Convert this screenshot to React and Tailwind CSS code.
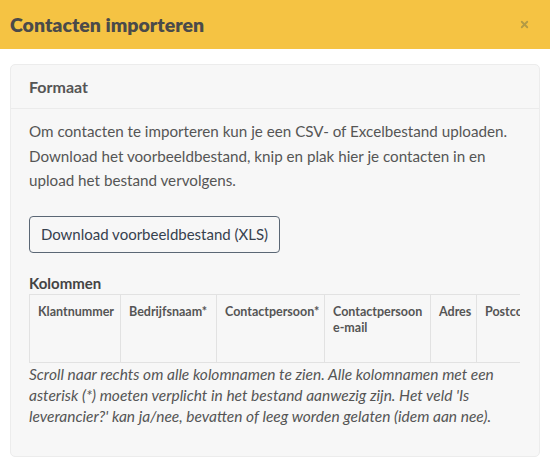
import { X } from 'lucide-react'

const COLUMNS = [
  { label: 'Klantnummer', w: 'w-[91px]' },
  { label: 'Bedrijfsnaam*', w: 'w-[96px]' },
  { label: 'Contactpersoon*', w: 'w-[108px]' },
  { label: 'Contactpersoon e-mail', w: 'w-[106px]' },
  { label: 'Adres', w: 'w-[46px]' },
  { label: 'Postcode', w: 'w-[90px]' },
  { label: 'Plaats', w: 'w-[70px]' },
]

export default function App() {
  return (
    <div className="w-[550px] h-[469px] bg-white overflow-hidden text-[#555]" style={{ fontFamily: 'Lato, "Open Sans", sans-serif' }}>
      <header className="h-[49px] bg-[#f5c343] flex items-center justify-between pl-[10px] pr-[20px]">
        <h1 className="text-[19.5px] font-extrabold text-[#4a4a4a]">Contacten importeren</h1>
        <X size={11} strokeWidth={4} className="text-[#b39a45]" />
      </header>

      <section className="mx-[10px] mt-[15px] rounded-[5px] border border-[#ececec] bg-[#f7f7f7] h-[393px]">
        <div className="h-[44px] flex items-center px-[18px] border-b border-[#ebebeb]">
          <h2 className="text-[16px] font-bold text-[#555]">Formaat</h2>
        </div>
        <div className="px-[18px] pt-[10px]">
          <p className="text-[15.2px] leading-[24.5px]">
            Om contacten te importeren kun je een CSV- of Excelbestand uploaden. Download het voorbeeldbestand, knip en plak hier je contacten in en upload het bestand vervolgens.
          </p>
          <button
            type="button"
            className="mt-[23px] h-[37px] w-[251px] rounded-[4px] border border-[#5b6775] text-[15px] text-[#36414e] bg-transparent"
          >
            Download voorbeeldbestand (XLS)
          </button>
          <h3 className="mt-[21px] text-[15px] font-bold text-[#444] leading-[18px]">Kolommen</h3>
          <div className="mt-[2px] overflow-hidden w-[491px]">
            <table className="border-collapse table-fixed w-[607px]">
              <thead>
                <tr>
                  {COLUMNS.map(col => (
                    <th
                      key={col.label}
                      className={`${col.w} h-[68px] align-top text-left px-[8px] pt-[9px] text-[12.5px] font-bold leading-[16px] text-[#555] border border-[#e2e2e2]`}
                    >
                      {col.label}
                    </th>
                  ))}
                </tr>
              </thead>
            </table>
          </div>
          <p className="mt-[1px] text-[15.5px] italic leading-[21px] text-[#555]">
            Scroll naar rechts om alle kolomnamen te zien. Alle kolomnamen met een asterisk (*) moeten verplicht in het bestand aanwezig zijn. Het veld 'Is leverancier?' kan ja/nee, bevatten of leeg worden gelaten (idem aan nee).
          </p>
        </div>
      </section>
    </div>
  )
}
